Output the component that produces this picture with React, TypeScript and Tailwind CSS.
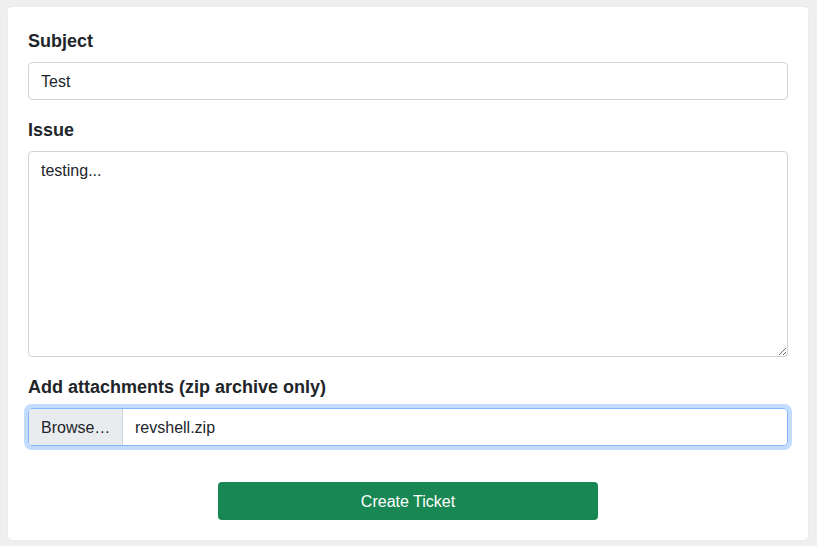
import React from "react";

export default function App() {
  return (
    <div
      className="min-h-[546px] w-full bg-[#efefef] pt-[7px] pl-[8px] pr-[9px] pb-[6px]"
      style={{ fontFamily: '"Liberation Sans", Arial, sans-serif' }}
    >
      <div className="flex w-[800px] flex-col rounded-[4px] bg-white px-[20px] pt-[20px] pb-[20px] text-[#212529] shadow-[0_0_2px_rgba(0,0,0,0.06)]">
        <label className="mb-[7px] block pt-[1px] text-[18px] font-bold leading-[27px]">Subject</label>
        <input
          readOnly
          defaultValue="Test"
          className="h-[38px] w-full rounded-[4px] border border-[#ced4da] bg-white px-[12px] pt-[2px] text-[16px] leading-[24px] text-[#212529] outline-none"
        />
        <label className="mt-[16px] mb-[7px] block pt-[1px] text-[18px] font-bold leading-[27px]">Issue</label>
        <textarea
          readOnly
          defaultValue="testing..."
          className="block h-[206px] w-full resize-y rounded-[4px] border border-[#ced4da] bg-white px-[12px] pt-[7px] pb-[5px] text-[16px] leading-[24px] text-[#212529] outline-none"
        />
        <label className="mt-[16px] mb-[7px] block pt-[1px] text-[18px] font-bold leading-[27px]">
          Add attachments (zip archive only)
        </label>
        <div className="flex h-[38px] w-full overflow-hidden rounded-[4px] border border-[#86b7fe] shadow-[0_0_0_4px_rgba(13,110,253,0.25)]">
          <div className="flex h-full w-[94px] items-center border-r border-[#ced4da] bg-[#e9ecef] px-[12px] pt-[2px] text-[16px]">
            Browse…
          </div>
          <div className="flex h-full items-center px-[12px] pt-[2px] text-[16px]">revshell.zip</div>
        </div>
        <div className="mt-[36px] flex justify-center">
          <button className="h-[38px] w-[380px] rounded-[4px] bg-[#198754] pt-[2px] text-[16px] text-white">
            Create Ticket
          </button>
        </div>
      </div>
    </div>
  );
}
